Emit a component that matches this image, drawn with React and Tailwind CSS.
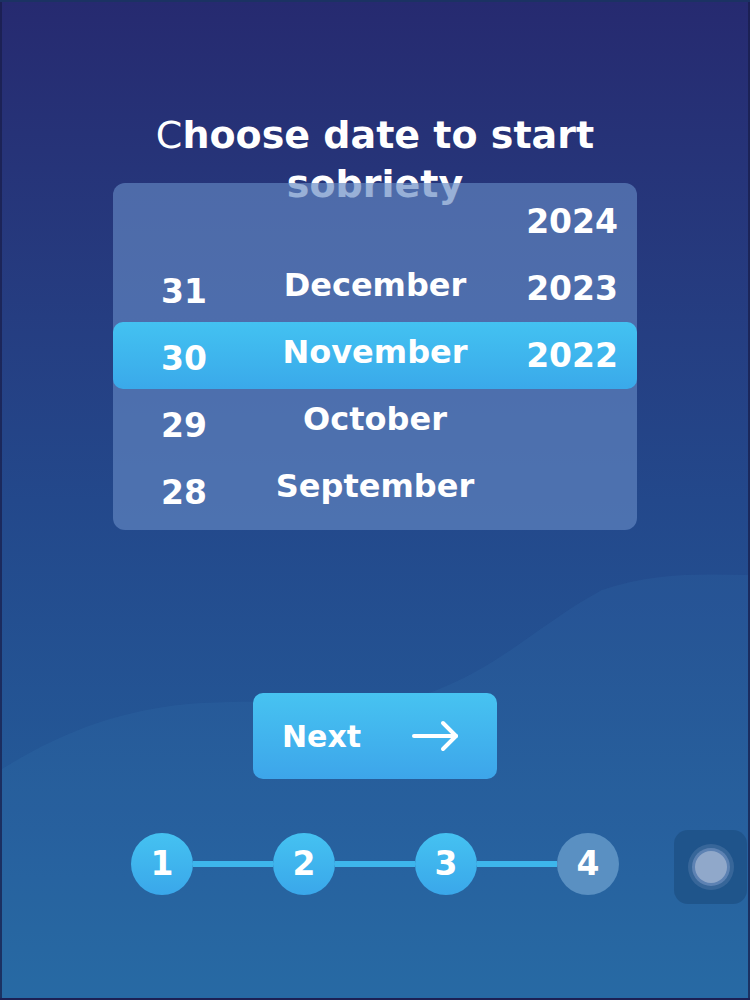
import React from 'react';

const FONT = { fontFamily: '"DejaVu Sans", "Noto Sans", sans-serif' };

const DAYS = ['', '31', '30', '29', '28'];
const MONTHS = ['', 'December', 'November', 'October', 'September'];
const YEARS = ['2024', '2023', '2022', '', ''];
const SELECTED = 2;

function PickerRow({ index }) {
  const active = index === SELECTED;
  return (
    <div
      className={`grid grid-cols-[142px_240px_1fr] h-[67px] items-center text-white font-bold ${
        active ? 'rounded-[10px] bg-gradient-to-b from-[#43c2f1] to-[#3aa9ea]' : ''
      }`}
    >
      <div className="text-center text-[33px] pt-[6px]">{DAYS[index]}</div>
      <div className="text-center text-[32px] pb-[7px]">{MONTHS[index]}</div>
      <div className="text-right text-[33px] pr-[19px]">{YEARS[index]}</div>
    </div>
  );
}

function Step({ n, done }) {
  return (
    <div
      className={`w-[62px] h-[62px] rounded-full flex items-center justify-center text-white font-bold text-[33px] ${
        done ? 'bg-gradient-to-b from-[#45c2f1] to-[#3aa7ea]' : 'bg-[#5a90c2]'
      }`}
    >
      {n}
    </div>
  );
}

export default function App() {
  return (
    <div
      style={FONT}
      className="relative w-[750px] h-[1000px] overflow-hidden bg-gradient-to-b from-[#262a70] via-[#23488b] to-[#2465a0] border-2 border-[#181c48]/70"
    >
      {/* background waves */}
      <svg className="absolute inset-0 pointer-events-none" width="750" height="1000" viewBox="0 0 750 1000">
        <path
          d="M0 767 C60 730 120 706 200 701 C300 697 380 706 430 690 C500 664 540 620 600 588 C650 570 700 572 750 573 V1000 H0 Z"
          fill="#4a96d8"
          fillOpacity="0.09"
        />
      </svg>

      <div className="relative flex flex-col items-center">
        <h1 className="mt-[109px] text-center text-white font-bold text-[38px] leading-[49px]">
          <span className="font-normal">C</span>hoose date to start
          <br />
          sobriety
        </h1>

        <div className="relative z-10 -mt-[26px] w-[524px] pt-[5px] pb-[7px] rounded-[12px] bg-[#6287c2]/[0.66]">
          {[0, 1, 2, 3, 4].map((i) => (
            <PickerRow key={i} index={i} />
          ))}
        </div>

        <button className="mt-[163px] w-[244px] h-[86px] rounded-[10px] bg-gradient-to-b from-[#47c3f1] to-[#3da5ea] flex items-center pl-[29px] text-white font-bold text-[30px]">
          <span>Next</span>
          <svg className="ml-[51px]" width="48" height="32" viewBox="0 0 48 32" fill="none" stroke="white" strokeWidth="4" strokeLinecap="round" strokeLinejoin="round">
            <path d="M2 16h42" />
            <path d="M31 3l13 13-13 13" />
          </svg>
        </button>

        <div className="mt-[54px] flex items-center">
          <Step n="1" done />
          <div className="w-[80px] h-[6px] bg-[#3db6ec]" />
          <Step n="2" done />
          <div className="w-[80px] h-[6px] bg-[#3db6ec]" />
          <Step n="3" done />
          <div className="w-[80px] h-[6px] bg-[#3db6ec]" />
          <Step n="4" />
        </div>
      </div>

      {/* floating assistive button */}
      <div className="absolute left-[672px] top-[828px] w-[73px] h-[74px] rounded-[14px] bg-[#1e5186]/80 flex items-center justify-center">
        <div className="w-[46px] h-[46px] rounded-full bg-[#4f77a8]/50 flex items-center justify-center">
          <div className="w-[38px] h-[38px] rounded-full bg-[#6d8ebd]/70 flex items-center justify-center">
            <div className="w-[32px] h-[32px] rounded-full bg-[#90a8ca]" />
          </div>
        </div>
      </div>
    </div>
  );
}
